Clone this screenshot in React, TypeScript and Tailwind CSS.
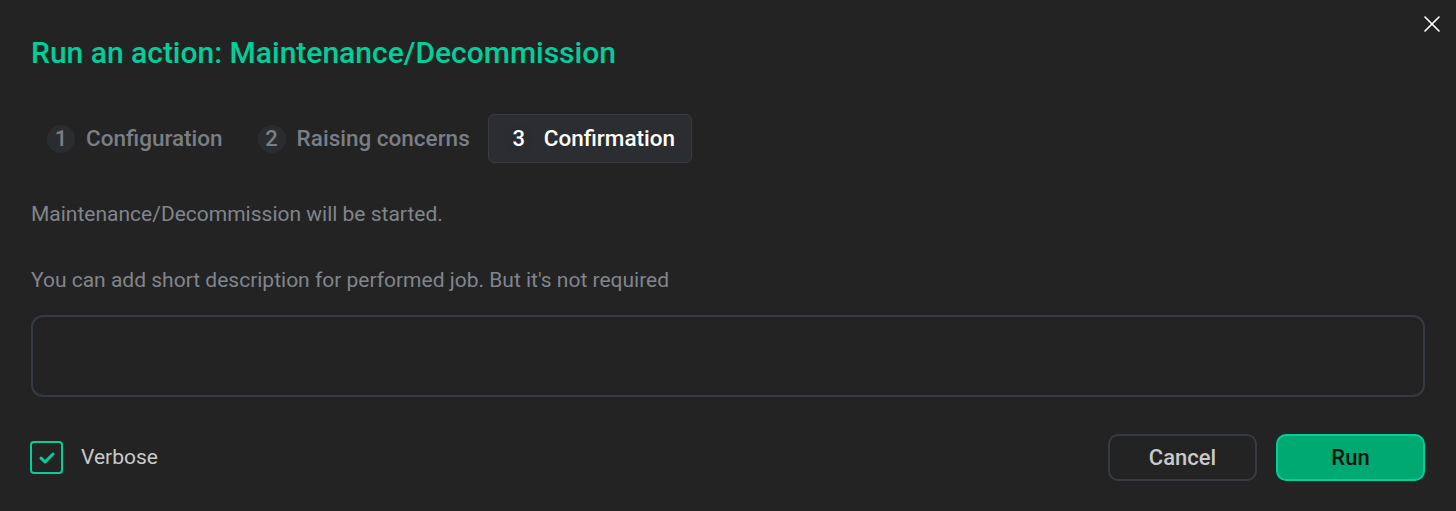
import { useState } from "react";
import { X } from "lucide-react";
import clsx from "clsx";

const steps = [
  { n: 1, label: "Configuration" },
  { n: 2, label: "Raising concerns" },
  { n: 3, label: "Confirmation" },
];

export default function App() {
  const [verbose, setVerbose] = useState(true);
  const active = 3;

  return (
    <main className="relative w-[1456px] h-[511px] bg-[#232323] font-['Roboto',sans-serif] px-[31px] overflow-hidden">
      <button className="absolute right-[10px] top-[10px] text-white">
        <X size={28} strokeWidth={1.4} />
      </button>

      <h1 className="pt-[34px] text-[30px] leading-[38px] font-medium text-[#00cf9b]">
        Run an action: Maintenance/Decommission
      </h1>

      <div className="mt-[42px] flex flex-row gap-x-[1px] -ml-px">
        {steps.map(({ n, label }) => (
          <div
            key={n}
            className={clsx(
              "flex flex-row items-center h-[49px] px-[16px] rounded-[6px] border",
              n === active
                ? "bg-[#2c2d31] border-[#393b40] text-white"
                : "border-transparent text-[#7a7e85]"
            )}
          >
            <span className="size-[28px] rounded-full bg-[#2b2c2f] flex items-center justify-center text-[22px] font-medium">
              {n}
            </span>
            <span className="ml-[11px] text-[22.5px] font-medium">{label}</span>
          </div>
        ))}
      </div>

      <p className="mt-[37px] text-[21px] leading-[28px] text-[#81858c]">
        Maintenance/Decommission will be started.
      </p>
      <p className="mt-[38px] text-[21px] leading-[28px] text-[#81858c]">
        You can add short description for performed job. But it's not required
      </p>

      <textarea className="mt-[21px] block w-full h-[82px] rounded-[12px] border-2 border-[#363b43] bg-transparent resize-none outline-none px-4 py-3 text-[18px] text-[#c8c8c8]" />

      <div className="mt-[37px] flex flex-row items-center justify-between">
        <label className="flex flex-row items-center gap-x-[18px] cursor-pointer">
          <button
            onClick={() => setVerbose((v) => !v)}
            className="-ml-px size-[33px] rounded-[4px] border-2 border-[#00d09c] flex items-center justify-center"
          >
            {verbose && (
              <svg width="16" height="12" viewBox="0 0 16 12" fill="none">
                <path
                  d="M2 6.2 L6 10 L14 2"
                  stroke="#00d09c"
                  strokeWidth="3"
                  strokeLinecap="round"
                  strokeLinejoin="round"
                />
              </svg>
            )}
          </button>
          <span className="text-[21px] text-[#c9c9c9]">Verbose</span>
        </label>

        <div className="flex flex-row gap-x-[19px]">
          <button className="w-[149px] h-[47px] rounded-[10px] border-2 border-[#363b43] text-[22px] font-medium text-[#c9c9c9]">
            Cancel
          </button>
          <button className="w-[149px] h-[47px] rounded-[10px] border-2 border-[#00d09c] bg-[#00a872] text-[22px] font-medium text-[#111]">
            Run
          </button>
        </div>
      </div>
    </main>
  );
}
